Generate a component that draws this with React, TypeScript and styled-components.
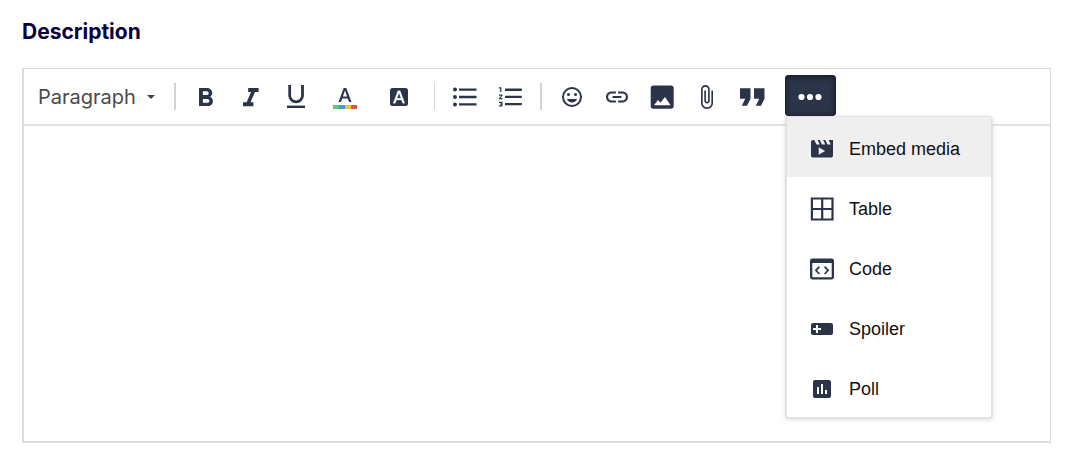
import React from "react";
import styled, { createGlobalStyle, css } from "styled-components";

const ink = "#2c344a";
const line = "#dcdcdc";

const GlobalStyle = createGlobalStyle`
  *, *::before, *::after { box-sizing: border-box; }
  body { margin: 0; background: #fff; }
`;

const Page = styled.main`
  display: flex;
  flex-direction: column;
  gap: 24px;
  padding: 20px 16px 10px 22px;
`;

const FieldLabel = styled.label`
  color: #08003c;
  font: 700 21px/24px Inter, "Liberation Sans", sans-serif;
`;

const Editor = styled.section`
  display: flex;
  flex-direction: column;
  border: solid ${line};
  border-width: 1px 1px 2px 2px;
`;

const Toolbar = styled.div`
  display: flex;
  align-items: center;
  height: 57px;
  border-bottom: 2px solid #e3e3e3;
`;

const Group = styled.div<{ $start?: number; $end?: number }>`
  display: flex;
  align-items: center;
  padding-left: ${(p) => p.$start ?? 8}px;
  padding-right: ${(p) => p.$end ?? 8}px;
`;

const Separator = styled.span<{ $thick?: boolean }>`
  width: ${(p) => (p.$thick ? 2 : 1)}px;
  height: 27px;
  background: #d3d4d9;
`;

const FormatPicker = styled.div`
  position: relative;
  width: 150px;
`;

const FormatSelect = styled.select`
  appearance: none;
  width: 100%;
  padding: 0 0 0 14px;
  border: 0;
  background: transparent;
  color: #4a4a4a;
  font: 400 20px/28px Inter, "Liberation Sans", sans-serif;
`;

const Caret = styled.svg`
  position: absolute;
  top: 12px;
  right: 19px;
  width: 8px;
  height: 4px;
  fill: #444;
  pointer-events: none;
`;

const ToolButton = styled.button<{ $wide?: boolean }>`
  display: flex;
  align-items: center;
  justify-content: center;
  width: ${(p) => (p.$wide ? 54 : 45)}px;
  height: 41px;
  padding: 0;
  border: 0;
  background: transparent;
  color: ${ink};
`;

const MoreWrap = styled.div`
  position: relative;
  margin: 0 0 2px 2px;
`;

const MoreButton = styled(ToolButton)`
  width: 51px;
  border-radius: 4px;
  background: ${ink};
  color: #fff;
  box-shadow: inset 0 1px 5px 1px #151a26;
`;

const Menu = styled.div`
  position: absolute;
  top: 100%;
  left: 0;
  z-index: 1;
  width: 208px;
  border: 2px solid #e3e3e3;
  border-top-width: 1px;
  border-radius: 4px;
  background: #fff;
  box-shadow: 0 1px 5px rgba(0, 0, 0, 0.12);
`;

const MenuItem = styled.button<{ $active?: boolean }>`
  display: flex;
  align-items: center;
  gap: 13px;
  width: 100%;
  height: 60px;
  padding: 0 21px;
  border: 0;
  background: transparent;
  color: #111;
  font: 400 18px/24px "Liberation Sans", Arial, sans-serif;
  ${(p) =>
    p.$active &&
    css`
      background: #efefef;
    `}

  svg {
    color: ${ink};
  }
`;

const MenuText = styled.span`
  padding-top: 4px;
`;

const Body = styled.textarea`
  display: block;
  width: 100%;
  height: 315px;
  padding: 16px;
  border: 0;
  outline: 0;
  resize: none;
  font: 400 18px/24px "Liberation Sans", Arial, sans-serif;
`;

type IconProps = { w?: number; h?: number; children: React.ReactNode };

const Icon = ({ w = 27, h = 27, children }: IconProps) => (
  <svg width={w} height={h} viewBox={`0 0 ${w} ${h}`} fill="currentColor" aria-hidden="true">
    {children}
  </svg>
);

const letterA =
  "M5.49 17h2.42l1.27-3.58h5.65L16.09 17h2.42L13.25 3h-2.5L5.49 17zm4.42-5.61 2.03-5.79h.12l2.03 5.79H9.91z";

type Tool = { name: string; icon: React.ReactNode; wide?: boolean };

const textTools: Tool[] = [
  {
    name: "Bold",
    icon: (
      <Icon>
        <path
          transform="translate(-2 -.15) scale(1.29)"
          d="M15.6 10.79c.97-.67 1.65-1.77 1.65-2.79 0-2.26-1.75-4-4-4H7v14h7.04c2.09 0 3.71-1.7 3.71-3.79 0-1.52-.86-2.82-2.15-3.42zM10 6.5h3c.83 0 1.5.67 1.5 1.5s-.67 1.5-1.5 1.5h-3v-3zm3.5 9H10v-3h3.5c.83 0 1.5.67 1.5 1.5s-.67 1.5-1.5 1.5z"
        />
      </Icon>
    ),
  },
  {
    name: "Italic",
    icon: (
      <Icon>
        <path transform="translate(-1.8 -.15) scale(1.3)" d="M10 4v3h2.21l-3.42 8H6v3h8v-3h-2.21l3.42-8H18V4z" />
      </Icon>
    ),
  },
  {
    name: "Underline",
    icon: (
      <Icon>
        <path d="M7.7 2v10.5a6.4 6.4 0 0 0 12.8 0V2" fill="none" stroke="currentColor" strokeWidth="2.8" />
        <path d="M5 22.6h18V25H5z" />
      </Icon>
    ),
  },
  {
    name: "Text color",
    wide: true,
    icon: (
      <Icon w={28}>
        <path transform="translate(2 2)" d={letterA} />
        <path d="M2 22h6v4H2z" fill="#5fc67b" />
        <path d="M8 22h6v4H8z" fill="#4a96dc" />
        <path d="M14 22h6v4h-6z" fill="#edc340" />
        <path d="M20 22h6v4h-6z" fill="#d95549" />
      </Icon>
    ),
  },
  {
    name: "Background color",
    wide: true,
    icon: (
      <Icon w={28}>
        <rect x="5" y="5" width="18" height="18" rx="2.5" />
        <path
          transform="translate(3.2 5) scale(.9)"
          d={letterA}
          fill="#fff"
          stroke="#fff"
          strokeWidth=".3"
        />
      </Icon>
    ),
  },
];

const listTools: Tool[] = [
  {
    name: "Bulleted list",
    icon: (
      <Icon>
        <circle cx="3" cy="6.6" r="2" />
        <circle cx="3" cy="14" r="2" />
        <circle cx="3" cy="21.4" r="2" />
        <path d="M7 5.4h17.5v2.4H7zM7 12.8h17.5v2.4H7zM7 20.2h17.5v2.4H7z" />
      </Icon>
    ),
  },
  {
    name: "Numbered list",
    icon: (
      <Icon>
        <path
          transform="translate(-.4 -.5) scale(1.2)"
          d="M2 17h2v.5H3v1h1v.5H2v1h3v-4H2v1zm1-9h1V4H2v1h1v3zm-1 3h1.8L2 13.1v.9h3v-1H3.2L5 10.9V10H2v1zm5-6v2h14V5H7zm0 14h14v-2H7v2zm0-6h14v-2H7v2z"
        />
      </Icon>
    ),
  },
];

const insertTools: Tool[] = [
  {
    name: "Emoji",
    icon: (
      <Icon>
        <circle cx="13" cy="14" r="9" fill="none" stroke="currentColor" strokeWidth="2" />
        <circle cx="9.5" cy="11.5" r="1.5" />
        <circle cx="16.5" cy="11.5" r="1.5" />
        <path d="M13 19.5c2.33 0 4.31-1.46 5.11-3.5H7.89c.8 2.04 2.78 3.5 5.11 3.5z" />
      </Icon>
    ),
  },
  {
    name: "Link",
    icon: (
      <Icon>
        <path
          transform="translate(-.2 .8) scale(1.1)"
          d="M3.9 12c0-1.71 1.39-3.1 3.1-3.1h4V7H7c-2.76 0-5 2.24-5 5s2.24 5 5 5h4v-1.9H7c-1.71 0-3.1-1.39-3.1-3.1zM8 13h8v-2H8v2zm9-6h-4v1.9h4c1.71 0 3.1 1.39 3.1 3.1s-1.39 3.1-3.1 3.1h-4V17h4c2.76 0 5-2.24 5-5s-2.24-5-5-5z"
        />
      </Icon>
    ),
  },
  {
    name: "Image",
    icon: (
      <Icon>
        <rect x="1.7" y="2.4" width="23" height="23.4" rx="2.8" />
        <path d="M5 22.3 9 17l2.4 2.8L16 14l5.6 8.3z" fill="#fff" />
      </Icon>
    ),
  },
  {
    name: "Attachment",
    icon: (
      <Icon>
        <path
          transform="translate(-.6 .9) scale(1.09)"
          d="M16.5 6v11.5c0 2.21-1.79 4-4 4s-4-1.79-4-4V5c0-1.38 1.12-2.5 2.5-2.5s2.5 1.12 2.5 2.5v10.5c0 .55-.45 1-1 1s-1-.45-1-1V6H10v9.5c0 1.38 1.12 2.5 2.5 2.5s2.5-1.12 2.5-2.5V5c0-2.21-1.79-4-4-4S7 2.79 7 5v12.5c0 3.04 2.46 5.5 5.5 5.5s5.5-2.46 5.5-5.5V6h-1.5z"
        />
      </Icon>
    ),
  },
  {
    name: "Quote",
    icon: (
      <Icon>
        <path transform="translate(-7.75 -7) scale(1.75)" d="M6 17h3l2-4V7H5v6h3zm8 0h3l2-4V7h-6v6h3z" />
      </Icon>
    ),
  },
];

const menuItems = [
  {
    name: "Embed media",
    icon: (
      <Icon w={28} h={28}>
        <path
          transform="translate(.8 2.6) scale(1.1)"
          d="m18 4 2 4h-3l-2-4h-2l2 4h-3l-2-4H8l2 4H7L5 4H4c-1.1 0-1.99.9-1.99 2L2 18c0 1.1.9 2 2 2h16c1.1 0 2-.9 2-2V4h-4z"
        />
        <path d="M10.7 14.2v7.6l6.4-3.8z" fill="#efefef" />
      </Icon>
    ),
  },
  {
    name: "Table",
    icon: (
      <Icon w={28} h={28}>
        <path
          d="M3.9 5.5h20.6v21H3.9zM14.2 5.5v21M3.9 16h20.6"
          fill="none"
          stroke="currentColor"
          strokeWidth="2.2"
        />
      </Icon>
    ),
  },
  {
    name: "Code",
    icon: (
      <Icon w={28} h={28}>
        <path
          fillRule="evenodd"
          d="M4.4 5.5h19.2A2.4 2.4 0 0 1 26 7.9v16.2a2.4 2.4 0 0 1-2.4 2.4H4.4A2.4 2.4 0 0 1 2 24.1V7.9a2.4 2.4 0 0 1 2.4-2.4zM4.3 10v14.2h19.4V10z"
        />
        <path
          d="M11.4 13.6 7.9 17.3l3.5 3.7M16.6 13.6l3.5 3.7-3.5 3.7"
          fill="none"
          stroke="currentColor"
          strokeWidth="1.7"
        />
      </Icon>
    ),
  },
  {
    name: "Spoiler",
    icon: (
      <Icon w={28} h={28}>
        <rect x="3" y="10" width="22" height="12" rx="2" />
        <path d="M9 12v8M5 16h8" stroke="#fff" strokeWidth="2" />
      </Icon>
    ),
  },
  {
    name: "Poll",
    icon: (
      <Icon w={28} h={28}>
        <rect x="5" y="7" width="18" height="18" rx="2" />
        <path d="M9 14h2v7H9zM13 11h2v10h-2zM17 17h2v4h-2z" fill="#fff" />
      </Icon>
    ),
  },
];

const Tools = ({ items }: { items: Tool[] }) => (
  <>
    {items.map((t) => (
      <ToolButton key={t.name} type="button" aria-label={t.name} $wide={t.wide}>
        {t.icon}
      </ToolButton>
    ))}
  </>
);

export default function App() {
  return (
    <>
      <GlobalStyle />
      <Page>
        <FieldLabel htmlFor="description">Description</FieldLabel>
        <Editor>
          <Toolbar role="toolbar" aria-label="Formatting">
            <FormatPicker>
              <FormatSelect aria-label="Block format" defaultValue="Paragraph">
                <option>Paragraph</option>
              </FormatSelect>
              <Caret viewBox="0 0 8 4" aria-hidden="true">
                <path d="M0 0h8L4 4z" />
              </Caret>
            </FormatPicker>
            <Separator $thick />
            <Group $start={7}>
              <Tools items={textTools} />
            </Group>
            <Separator />
            <Group $end={7}>
              <Tools items={listTools} />
            </Group>
            <Separator $thick />
            <Group>
              <Tools items={insertTools} />
            </Group>
            <MoreWrap>
              <MoreButton type="button" aria-label="More" aria-haspopup="menu" aria-expanded="true">
                <Icon>
                  <circle cx="4.5" cy="15" r="3.1" />
                  <circle cx="13" cy="15" r="3.1" />
                  <circle cx="21.5" cy="15" r="3.1" />
                </Icon>
              </MoreButton>
              <Menu role="menu">
                {menuItems.map((m, i) => (
                  <MenuItem key={m.name} type="button" role="menuitem" $active={i === 0}>
                    {m.icon}
                    <MenuText>{m.name}</MenuText>
                  </MenuItem>
                ))}
              </Menu>
            </MoreWrap>
          </Toolbar>
          <Body id="description" />
        </Editor>
      </Page>
    </>
  );
}
